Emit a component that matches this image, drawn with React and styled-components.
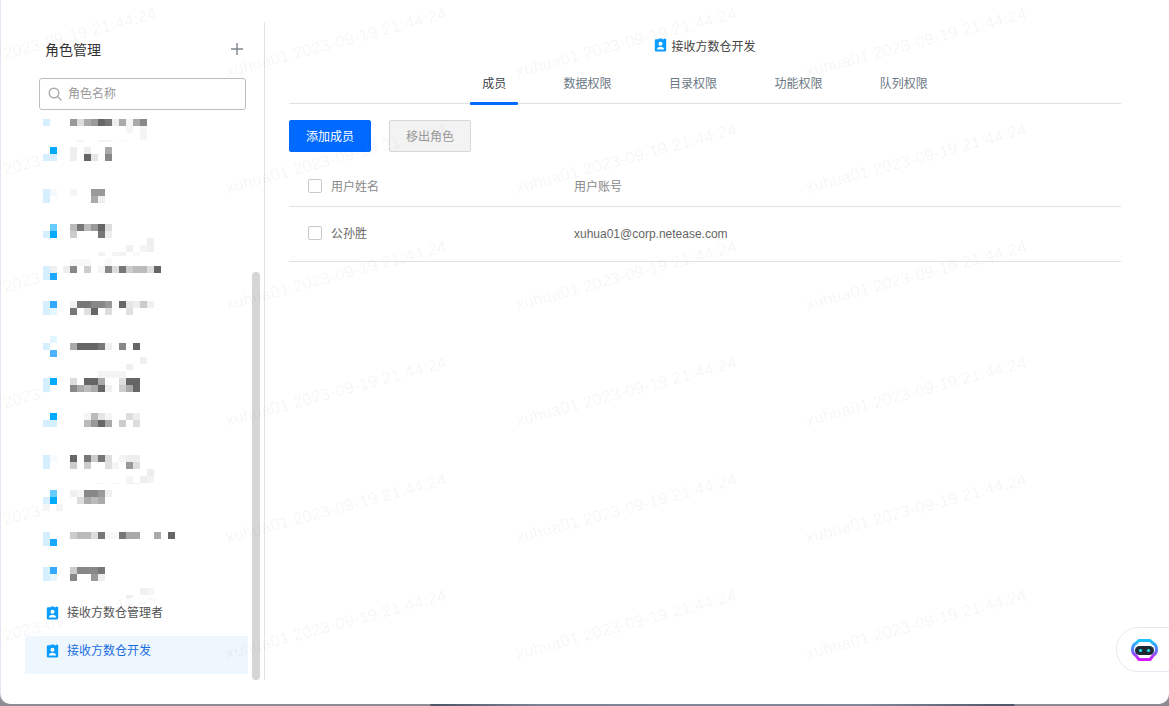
import styled, { createGlobalStyle } from "styled-components";

const GlobalStyle = createGlobalStyle`
  html, body {
    margin: 0;
    padding: 0;
    height: 100%;
  }
  body {
    overflow: hidden;
    font-family: "Liberation Sans", "Noto Sans CJK SC", sans-serif;
    background: linear-gradient(
      to right,
      #8d8d93 0,
      #8d8d93 430px,
      #4b5467 431px,
      #7f8396 540px,
      #85889a 860px,
      #4d5568 1014px,
      #8b8b92 1015px
    );
  }
`;

const Shell = styled.div`
  position: relative;
  display: flex;
  box-sizing: border-box;
  width: 1168px;
  height: 704px;
  margin-left: 1px;
  padding: 22px 48px 24px 0;
  background: #fff;
  border-radius: 0 0 10px 10px;
  overflow: hidden;
  box-shadow: -1px 0 0 #e3e6f0;
`;

const Watermarks = styled.div`
  position: absolute;
  left: -100px;
  top: -16px;
  z-index: 1;
  display: grid;
  grid-template-columns: repeat(4, 290px);
  grid-auto-rows: 116.4px;
  pointer-events: none;
`;

const Watermark = styled.span`
  display: flex;
  align-items: center;
  justify-content: center;
  font-size: 16.5px;
  letter-spacing: 0.25px;
  white-space: nowrap;
  color: rgba(0, 0, 0, 0.055);
  transform: rotate(-15deg);
`;

const Sidebar = styled.aside`
  position: relative;
  display: flex;
  flex-direction: column;
  flex: none;
  box-sizing: border-box;
  width: 264px;
  border-right: 1px solid #e3e3e6;
`;

const SidebarHead = styled.div`
  display: flex;
  align-items: center;
  justify-content: space-between;
  height: 56px;
  padding: 0 20px 2px 44px;
  box-sizing: border-box;
  font-size: 14px;
  color: #333;
`;

const PlusButton = styled.svg`
  width: 14px;
  height: 14px;
  stroke: #7d8791;
  stroke-width: 1.4;
  fill: none;
`;

const SearchBox = styled.div`
  display: flex;
  align-items: center;
  gap: 6px;
  box-sizing: border-box;
  width: 207px;
  height: 32px;
  margin-left: 38px;
  padding: 0 0 3px 8px;
  border: 1px solid #bdbdbd;
  border-radius: 3px;
  font-size: 12px;
  color: #999;
  background: #fff;
`;

const SearchIcon = styled.svg`
  width: 14px;
  height: 14px;
  flex: none;
  margin-top: 3px;
  stroke: #aaa;
  stroke-width: 1.4;
  fill: none;
  stroke-linecap: round;
`;

const RoleList = styled.div`
  display: flex;
  flex-direction: column;
  justify-content: flex-end;
  width: 223px;
  height: 564px;
  margin-left: 24px;
  overflow: hidden;
`;

const Censored = styled.svg`
  position: relative;
  z-index: 2;
  display: block;
  flex: none;
  width: 182px;
  height: 38px;
  margin-left: 18px;
  background: #fff;
`;

const RoleRow = styled.div`
  display: flex;
  flex: none;
  gap: 8px;
  box-sizing: border-box;
  height: 38px;
  padding-left: 21px;
  font-size: 12px;
  line-height: 30px;
  color: ${(props) => (props.$active ? "#1a6fdf" : "#555")};
  background: ${(props) => (props.$active ? "#eef6fe" : "transparent")};
`;

const Badge = styled.svg`
  width: 13px;
  height: 14px;
  flex: none;
  margin-top: ${(props) => props.$top || 0}px;
`;

const Scrollbar = styled.div`
  position: absolute;
  left: 251px;
  top: 250px;
  width: 8px;
  height: 408px;
  border-radius: 4px;
  background: #d6d6d6;
`;

const Main = styled.main`
  flex: 1;
  min-width: 0;
  margin-left: 24px;
`;

const Heading = styled.div`
  display: flex;
  align-items: center;
  justify-content: center;
  gap: 4px;
  height: 20px;
  margin-top: 13px;
  font-size: 12px;
  color: #444;
`;

const Tabs = styled.div`
  display: flex;
  justify-content: center;
  gap: 33.4px;
  height: 38px;
  margin-top: 10px;
  border-bottom: 1px solid #e1e1e5;
`;

const Tab = styled.div`
  position: relative;
  padding: 0 12px;
  font-size: 12px;
  line-height: 38px;
  color: ${(props) => (props.$active ? "#3c4248" : "#6c7784")};

  &::after {
    content: "";
    display: ${(props) => (props.$active ? "block" : "none")};
    position: absolute;
    left: 0;
    right: 0;
    bottom: -2px;
    height: 3px;
    border-radius: 1px;
    background: #0069ff;
  }
`;

const Toolbar = styled.div`
  display: flex;
  gap: 18px;
  margin-top: 16px;
`;

const Button = styled.button`
  box-sizing: border-box;
  width: 82px;
  height: 32px;
  padding: 0 0 2px;
  border: 1px solid ${(props) => (props.$primary ? "#0069ff" : "#d6d6d6")};
  border-radius: 2px;
  font: inherit;
  font-size: 12px;
  color: ${(props) => (props.$primary ? "#fff" : "#999")};
  background: ${(props) => (props.$primary ? "#0069ff" : "#f3f3f3")};
`;

const TableRow = styled.div`
  display: grid;
  grid-template-columns: 285px 1fr;
  align-items: center;
  box-sizing: border-box;
  height: ${(props) => (props.$head ? 39 : 55)}px;
  margin-top: ${(props) => (props.$head ? 16 : 0)}px;
  padding-bottom: 3px;
  border-bottom: 1px solid #e1e1e5;
  font-size: 12px;
  color: ${(props) => (props.$head ? "#888" : "#666")};
`;

const NameCell = styled.div`
  display: flex;
  align-items: center;
  gap: 9px;
  padding-left: 19px;
`;

const AccountCell = styled.div`
  padding-top: ${(props) => (props.$email ? 2 : 0)}px;
`;

const Checkbox = styled.span`
  box-sizing: border-box;
  width: 14px;
  height: 14px;
  border: 1px solid #c8c8c8;
  border-radius: 2px;
  background: #fff;
`;

const Assistant = styled.div`
  position: absolute;
  right: -1px;
  bottom: 32px;
  z-index: 2;
  display: flex;
  align-items: center;
  box-sizing: border-box;
  width: 54px;
  height: 45px;
  padding-left: 14px;
  border: 1px solid #e6e9f1;
  border-radius: 22px 0 0 22px;
  background: #fff;
`;

const RobotIcon = styled.svg`
  width: 27px;
  height: 22px;
`;

// censored role names, in page coordinates: x, y, colour
const blocks = [
  [43, 119, "#d5efff"], [70, 119, "#999"], [77, 119, "#ddd"], [84, 119, "#aaa"], [91, 119, "#999"], [98, 119, "#666"], [105, 119, "#777"], [112, 119, "#eee"], [119, 119, "#aaa"], [126, 119, "#f5f5f5"], [133, 119, "#aaa"], [140, 119, "#888"],
  [126, 126, "#f5f5f5"], [140, 126, "#f5f5f5"], [140, 133, "#f5f5f5"], [77, 140, "#f5f5f5"], [98, 140, "#f5f5f5"], [105, 140, "#f5f5f5"], [119, 140, "#fafafa"],
  [50, 147, "#0af"], [70, 147, "#eee"], [84, 147, "#eee"], [105, 147, "#aaa"],
  [43, 154, "#d5efff"], [50, 154, "#d5efff"], [70, 154, "#eee"], [84, 154, "#666"], [91, 154, "#e5e5e5"], [105, 154, "#888"],
  [43, 189, "#d5efff"], [50, 189, "#f5faff"], [70, 189, "#f5f5f5"], [91, 189, "#999"], [98, 189, "#999"],
  [43, 196, "#d5efff"], [91, 196, "#aaa"], [98, 196, "#f0f0f0"],
  [50, 224, "#6cf"], [70, 224, "#bbb"], [77, 224, "#777"], [84, 224, "#bbb"], [91, 224, "#999"], [98, 224, "#666"], [105, 224, "#ddd"],
  [43, 231, "#d5efff"], [50, 231, "#0af"], [70, 231, "#ccc"], [98, 231, "#777"], [105, 231, "#eee"],
  [147, 238, "#f0f0f0"], [126, 245, "#f0f0f0"], [140, 245, "#f5f5f5"], [147, 245, "#f0f0f0"], [98, 252, "#f3f3f3"], [112, 252, "#f5f5f5"], [119, 252, "#f3f3f3"], [133, 252, "#f8f8f8"],
  [70, 259, "#f8f8f8"], [77, 259, "#f8f8f8"], [84, 259, "#f8f8f8"], [105, 259, "#f8f8f8"],
  [43, 266, "#d5efff"], [50, 266, "#f0f0f0"], [63, 266, "#eee"], [70, 266, "#888"], [84, 266, "#ccc"], [98, 266, "#f5f5f5"], [105, 266, "#888"], [112, 266, "#ddd"], [119, 266, "#777"], [126, 266, "#ccc"], [133, 266, "#bbb"], [140, 266, "#bbb"], [147, 266, "#ddd"], [154, 266, "#666"],
  [43, 273, "#d5efff"], [50, 273, "#1aa7ff"],
  [43, 301, "#d5efff"], [50, 301, "#3af"], [70, 301, "#f0f0f0"], [77, 301, "#777"], [84, 301, "#777"], [91, 301, "#888"], [98, 301, "#888"], [105, 301, "#999"], [119, 301, "#666"], [126, 301, "#e5e5e5"], [133, 301, "#eee"], [140, 301, "#ccc"], [147, 301, "#f0f0f0"],
  [43, 308, "#d5efff"], [50, 308, "#e5f6ff"], [70, 308, "#777"], [84, 308, "#e0e0e0"], [91, 308, "#666"], [105, 308, "#ddd"], [126, 308, "#e0e0e0"],
  [50, 336, "#e0f5ff"],
  [43, 343, "#d5efff"], [70, 343, "#aaa"], [77, 343, "#666"], [84, 343, "#666"], [91, 343, "#666"], [98, 343, "#777"], [105, 343, "#eee"], [119, 343, "#888"], [133, 343, "#666"],
  [50, 350, "#4ab4ff"], [140, 357, "#f0f0f0"], [126, 364, "#f0f0f0"],
  [98, 371, "#f5f5f5"], [105, 371, "#f5f5f5"], [112, 371, "#f5f5f5"], [119, 371, "#f5f5f5"],
  [43, 378, "#d5efff"], [50, 378, "#0af"], [70, 378, "#ddd"], [84, 378, "#666"], [91, 378, "#666"], [98, 378, "#aaa"], [119, 378, "#ddd"], [126, 378, "#666"], [133, 378, "#666"],
  [43, 385, "#d5efff"], [70, 385, "#888"], [77, 385, "#aaa"], [84, 385, "#bbb"], [91, 385, "#aaa"], [98, 385, "#666"], [105, 385, "#f0f0f0"], [119, 385, "#ccc"], [126, 385, "#aaa"], [133, 385, "#666"],
  [50, 413, "#0af"], [84, 413, "#f5f5f5"], [91, 413, "#bbb"], [98, 413, "#e5e5e5"], [105, 413, "#f5f5f5"], [126, 413, "#ddd"], [133, 413, "#eee"],
  [43, 420, "#d5efff"], [50, 420, "#d5efff"], [84, 420, "#bbb"], [91, 420, "#999"], [98, 420, "#666"], [105, 420, "#aaa"], [119, 420, "#ccc"], [133, 420, "#ddd"],
  [43, 455, "#d5efff"], [50, 455, "#f5faff"], [70, 455, "#666"], [84, 455, "#777"], [91, 455, "#ccc"], [98, 455, "#777"], [105, 455, "#ddd"], [119, 455, "#f5f5f5"], [126, 455, "#eee"], [133, 455, "#eee"],
  [43, 462, "#d5efff"], [70, 462, "#ccc"], [84, 462, "#ccc"], [105, 462, "#e0e0e0"], [112, 462, "#f5f5f5"], [126, 462, "#999"], [133, 462, "#ddd"],
  [147, 469, "#eee"], [140, 476, "#eee"], [147, 476, "#f3f3f3"], [126, 476, "#f5f5f5"], [98, 483, "#f5f5f5"], [112, 483, "#f5f5f5"], [126, 483, "#eee"], [133, 483, "#eee"],
  [50, 490, "#6cf"], [70, 490, "#f0f0f0"], [77, 490, "#f5f5f5"], [84, 490, "#888"], [91, 490, "#888"], [98, 490, "#999"], [105, 490, "#f0f0f0"],
  [43, 497, "#d5efff"], [50, 497, "#0af"], [77, 497, "#ddd"], [84, 497, "#aaa"], [91, 497, "#bbb"], [98, 497, "#aaa"],
  [43, 504, "#f5f5f5"], [56, 504, "#f5f5f5"],
  [43, 532, "#d5efff"], [70, 532, "#ccc"], [77, 532, "#bbb"], [84, 532, "#bbb"], [91, 532, "#ddd"], [98, 532, "#777"], [105, 532, "#f8f8f8"], [112, 532, "#f8f8f8"], [119, 532, "#777"], [126, 532, "#aaa"], [133, 532, "#aaa"], [154, 532, "#aaa"], [168, 532, "#666"],
  [43, 539, "#d5efff"], [50, 539, "#1aa7ff"],
  [43, 567, "#d5efff"], [50, 567, "#3af"], [70, 567, "#ccc"], [77, 567, "#888"], [84, 567, "#888"], [91, 567, "#888"], [98, 567, "#777"],
  [43, 574, "#d5efff"], [50, 574, "#e5f6ff"], [70, 574, "#888"], [91, 574, "#999"], [98, 574, "#eee"],
  [140, 588, "#f0f0f0"], [147, 588, "#f5f5f5"], [126, 595, "#f0f0f0"],
];

const censoredTops = Array.from({ length: 13 }, (_, i) => 104 + i * 38);
const tabs = ["成员", "数据权限", "目录权限", "功能权限", "队列权限"];

const RoleBadge = ({ top }) => (
  <Badge $top={top} viewBox="0 0 14 16">
    <path
      d="M3.5 1.5h1.5V.5h4v1h1.5A1.5 1.5 0 0 1 13.5 3v11a1.5 1.5 0 0 1-1.5 1.5H2A1.5 1.5 0 0 1 .5 14V3A1.5 1.5 0 0 1 2 1.5z"
      fill="#0a9dff"
    />
    <circle cx="7" cy="6.6" r="2.3" fill="#fff" />
    <path d="M2.8 13c.2-2 2-3 4.2-3s4 1 4.2 3z" fill="#fff" />
  </Badge>
);

const Robot = () => (
  <RobotIcon viewBox="0 0 27 22">
    <defs>
      <linearGradient id="robotRing" x1="0" y1="0" x2="0" y2="1">
        <stop offset="0" stopColor="#1cc4ff" />
        <stop offset="0.5" stopColor="#5a7cff" />
        <stop offset="1" stopColor="#d61cff" />
      </linearGradient>
    </defs>
    <path
      d="M8 1.5h11l3.5 3.2c2 .9 3 3 3 5.8s-1 4.6-3 5.6l-3.5 4.4H8l-3.5-4.4c-2-1-3-2.8-3-5.6s1-4.9 3-5.8z"
      fill="#fff"
      stroke="url(#robotRing)"
      strokeWidth="3"
      strokeLinejoin="round"
    />
    <rect x="4" y="7" width="19" height="9" rx="4.5" fill="#1d2a33" />
    <circle cx="9.5" cy="11.5" r="1.6" fill="#19e6f0" />
    <circle cx="17.5" cy="11.5" r="1.6" fill="#19e6f0" />
  </RobotIcon>
);

const App = () => (
  <>
    <GlobalStyle />
    <Shell>
      <Watermarks>
        {Array.from({ length: 24 }, (_, i) => (
          <Watermark key={i}>xuhua01 2023-09-19 21:44:24</Watermark>
        ))}
      </Watermarks>
      <Sidebar>
        <SidebarHead>
          角色管理
          <PlusButton viewBox="0 0 14 14">
            <path d="M7 1v12M1 7h12" />
          </PlusButton>
        </SidebarHead>
        <SearchBox>
          <SearchIcon viewBox="0 0 14 14">
            <circle cx="6" cy="6" r="4.8" />
            <path d="M9.6 9.6 13 13" />
          </SearchIcon>
          角色名称
        </SearchBox>
        <RoleList>
          {censoredTops.map((top) => (
            <Censored key={top} viewBox={`43 ${top} 182 38`}>
              {blocks
                .filter(([, y]) => y >= top && y < top + 38)
                .map(([x, y, color]) => (
                  <rect key={`${x}-${y}`} x={x} y={y} width="7" height="7" fill={color} />
                ))}
            </Censored>
          ))}
          <RoleRow>
            <RoleBadge top={8} />
            接收方数仓管理者
          </RoleRow>
          <RoleRow $active>
            <RoleBadge top={8} />
            接收方数仓开发
          </RoleRow>
        </RoleList>
        <Scrollbar />
      </Sidebar>
      <Main>
        <Heading>
          <RoleBadge />
          接收方数仓开发
        </Heading>
        <Tabs>
          {tabs.map((tab, i) => (
            <Tab key={tab} $active={i === 0}>
              {tab}
            </Tab>
          ))}
        </Tabs>
        <Toolbar>
          <Button $primary>添加成员</Button>
          <Button>移出角色</Button>
        </Toolbar>
        <TableRow $head>
          <NameCell>
            <Checkbox />
            用户姓名
          </NameCell>
          <AccountCell>用户账号</AccountCell>
        </TableRow>
        <TableRow>
          <NameCell>
            <Checkbox />
            公孙胜
          </NameCell>
          <AccountCell $email>xuhua01@corp.netease.com</AccountCell>
        </TableRow>
      </Main>
      <Assistant>
        <Robot />
      </Assistant>
    </Shell>
  </>
);

export default App;
